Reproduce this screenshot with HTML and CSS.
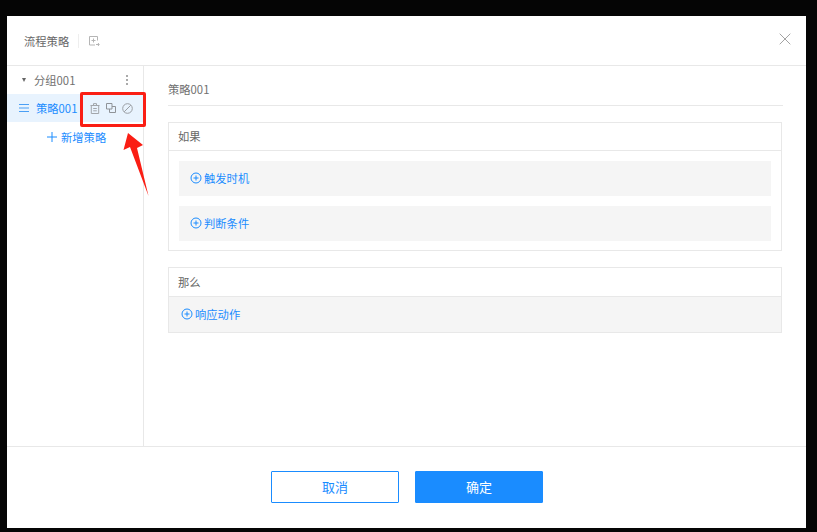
FILE: index.html
```html
<!DOCTYPE html>
<html lang="zh">
<head>
<meta charset="utf-8">
<title>流程策略</title>
<link rel="stylesheet" href="styles.css">
</head>
<body>
<div class="modal">
  <header class="modal-head">
    <span class="modal-title">流程策略</span>
    <span class="head-sep"></span>
    <svg class="head-icon" viewBox="0 0 12 12" width="12" height="12" fill="none" stroke="#b5b5b5"><path d="M7 10H1.500V1.500h8V5.500"/><path d="M3.500 5.500h4M5.500 3.500v4"/><path d="M8 9.500h3M10 8l1.200 1.500L10 11"/></svg>
    <svg class="close" viewBox="0 0 12 12" width="12" height="12" stroke="#a3a3a3" stroke-width="1"><path d="M.7.7l10.600 10.600M11.300.7L.7 11.300"/></svg>
  </header>
  <div class="modal-body">
    <aside class="side">
      <div class="group-row">
        <span class="caret"></span>
        <span class="group-name">分组001</span>
        <span class="dots"><i></i><i></i><i></i></span>
      </div>
      <div class="item-row">
        <svg class="menu" viewBox="0 0 10 8" width="10" height="8" stroke="#4a9ff5" stroke-width="1"><path d="M0 .5h10M0 4h10M0 7.500h10"/></svg>
        <span class="item-name">策略001</span>
        <span class="actions">
          <svg viewBox="0 0 10 11" width="10" height="11" fill="none" stroke="#a2a6ab"><path d="M.5 2.500h9M3.500 2.500V.6h3v1.900M1.300 2.500v8h7.400v-8"/><path d="M3.200 5.500h3.600M3.200 7.800h3.600"/></svg>
          <svg viewBox="0 0 10 10" width="10" height="10" fill="none" stroke="#8f9398"><path d="M.5.500h5.500v5.500H.5z"/><path d="M6 3.500h3.500v6h-6V6"/></svg>
          <svg viewBox="0 0 11 11" width="11" height="11" fill="none" stroke="#9a9ea3"><circle cx="5.500" cy="5.500" r="4.800"/><path d="M2.200 8.800l6.600-6.600"/></svg>
        </span>
      </div>
      <div class="add-row">
        <svg viewBox="0 0 10 10" width="10" height="10" stroke="#1a8cff"><path d="M5 0v10M0 5h10"/></svg>
        <span>新增策略</span>
      </div>
    </aside>
    <main class="content">
      <div class="policy-name">策略001</div>
      <section class="box box-if">
        <div class="box-title">如果</div>
        <div class="box-inner">
          <div class="add-line">
            <svg class="plus" viewBox="0 0 12 12" width="12" height="12" fill="none" stroke="#1a8cff"><circle cx="6" cy="6" r="5"/><path d="M3.500 6h5M6 3.500v5"/></svg>
            <span>触发时机</span>
          </div>
          <div class="add-line">
            <svg class="plus" viewBox="0 0 12 12" width="12" height="12" fill="none" stroke="#1a8cff"><circle cx="6" cy="6" r="5"/><path d="M3.500 6h5M6 3.500v5"/></svg>
            <span>判断条件</span>
          </div>
        </div>
      </section>
      <section class="box box-then">
        <div class="box-title then-title">那么</div>
        <div class="then-line">
          <svg class="plus" viewBox="0 0 12 12" width="12" height="12" fill="none" stroke="#1a8cff"><circle cx="6" cy="6" r="5"/><path d="M3.500 6h5M6 3.500v5"/></svg>
          <span>响应动作</span>
        </div>
      </section>
    </main>
  </div>
  <footer class="modal-foot">
    <button class="btn btn-ghost">取消</button>
    <button class="btn btn-primary">确定</button>
  </footer>
</div>
<div class="mark-rect"></div>
<svg class="mark-arrow" viewBox="0 0 30 70" width="30" height="70"><path d="M6 1L21 13 15 16 26.500 64 8 15 1.500 18z" fill="#fa1e14"/></svg>
</body>
</html>
```
FILE: styles.css
```css
* { box-sizing: border-box; }
html, body { height: 100%; }
body {
  margin: 0;
  background: #050505;
  font-family: "Noto Sans CJK SC", "Liberation Sans", sans-serif;
  font-size: 11.300px;
  color: #666;
  padding: 16px 11px 4px 7px;
  position: relative;
  overflow: hidden;
}
.modal {
  height: 512px;
  background: #fff;
  display: flex;
  flex-direction: column;
}
.modal-head {
  height: 50px;
  flex: none;
  border-bottom: 1px solid #e8e8e8;
  display: flex;
  align-items: center;
  padding: 0 15px 0 17px;
}
.modal-title { line-height: 18px; }
.head-sep { width: 1px; height: 14px; background: #eee; margin: 0 10px 0 9px; }
.head-icon { flex: none; margin-left: -1px; }
.close { margin-left: auto; flex: none; margin-top: -3px; }
.modal-body { flex: 1; display: flex; min-height: 0; }
.side { width: 137px; flex: none; border-right: 1px solid #e8e8e8; }
.group-row {
  height: 28px;
  display: flex;
  align-items: center;
  padding: 0 15px 0 15px;
}
.caret {
  width: 0; height: 0;
  border-left: 2.500px solid transparent;
  border-right: 2.500px solid transparent;
  border-top: 4px solid #666;
  margin-right: 8px;
}
.group-name { flex: 1; color: #707070; }
.dots { display: flex; flex-direction: column; gap: 2px; }
.dots i { width: 2px; height: 2px; background: #aaa; display: block; }
.item-row {
  height: 28px;
  background: #e8f3fe;
  display: flex;
  align-items: center;
  padding-left: 12px;
}
.menu { flex: none; margin-right: 7px; }
.item-name { color: #1a8cff; width: 47px; flex: none; white-space: nowrap; }
.actions { display: flex; align-items: center; gap: 6px; margin-left: 7px; }
.add-row {
  height: 30px;
  display: flex;
  align-items: center;
  gap: 4px;
  padding-left: 40px;
  color: #1a8cff;
}
.content { flex: 1; padding: 0 23px 0 24px; min-width: 0; }
.policy-name {
  height: 40px;
  line-height: 47px;
  border-bottom: 1px solid #e8e8e8;
  color: #707070;
}
.box { border: 1px solid #e8e8e8; margin-right: 1px; }
.box-if { margin-top: 16px; height: 129px; }
.box-then { margin-top: 16px; height: 66px; }
.box-title { height: 28px; line-height: 27px; padding-left: 9px; border-bottom: 1px solid #e8e8e8; color: #666; }
.then-title { height: 29px; line-height: 29px; }
.box-inner { padding: 10px; display: flex; flex-direction: column; gap: 10px; }
.add-line {
  height: 35px;
  background: #f5f5f5;
  display: flex;
  align-items: center;
  gap: 2px;
  padding: 0 0 1px 11px;
  color: #1a8cff;
}
.then-line {
  height: 35px;
  background: #f5f5f5;
  display: flex;
  align-items: center;
  gap: 2px;
  padding: 0 0 1px 12px;
  color: #1a8cff;
}
.plus { flex: none; margin-top: -1px; }
.modal-foot {
  height: 82px;
  flex: none;
  border-top: 1px solid #e8e8e8;
  display: flex;
  gap: 16px;
  padding: 24px 0 0 264px;
}
.btn {
  width: 128px;
  height: 32px;
  border-radius: 1px;
  font: inherit;
  font-size: 13px;
  padding: 0 0 2px;
}
.btn-ghost { background: #fff; border: 1px solid #1a8cff; color: #1a8cff; }
.btn-primary { background: #1a8cff; border: 1px solid #1a8cff; color: #fff; }
.mark-rect {
  position: absolute;
  left: 80px; top: 92px;
  width: 66px; height: 35px;
  border: 3px solid #fa1e14;
  border-radius: 2px;
}
.mark-arrow { position: absolute; left: 122px; top: 132px; }
```
